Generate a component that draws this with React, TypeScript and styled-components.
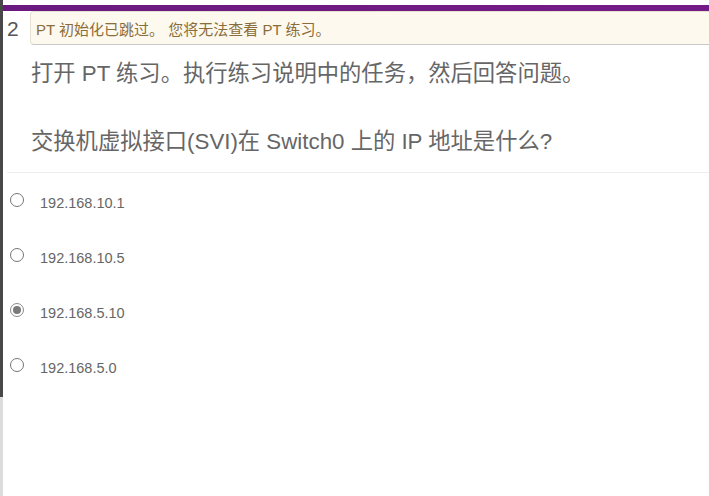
import React from "react";
import styled, { createGlobalStyle } from "styled-components";

const GlobalStyle = createGlobalStyle`
  html, body {
    margin: 0;
    padding: 0;
    background: #fff;
    overflow: hidden;
  }
  body {
    font-family: "Liberation Sans", Arial, "Noto Sans CJK SC", sans-serif;
  }
`;

const Page = styled.div`
  display: flex;
  width: 709px;
  height: 496px;
  overflow: hidden;
`;

const SideRail = styled.div`
  width: 3px;
  display: flex;
  flex-direction: column;
  flex-shrink: 0;
`;

const RailDark = styled.div`
  height: 397px;
  background: #484848;
`;

const RailLight = styled.div`
  flex: 1;
  background: #dcdcdc;
`;

const Main = styled.div`
  flex: 1;
  display: flex;
  flex-direction: column;
  min-width: 0;
`;

const PurpleBar = styled.div`
  margin-top: 5px;
  height: 6px;
  background: linear-gradient(90deg, #6a1a7e 0%, #751b88 100%);
`;

const HeaderRow = styled.div`
  display: flex;
  align-items: center;
  padding-left: 4px;
`;

const QuestionNo = styled.div`
  width: 23px;
  font-size: 21px;
  color: #555;
  line-height: 1;
`;

const Alert = styled.div`
  flex: 1;
  height: 32px;
  margin-right: -6px;
  display: flex;
  align-items: center;
  padding-left: 5px;
  background: #fdf9ee;
  border: 1px solid #e6e0d2;
  border-bottom-color: #c8c8c8;
  border-radius: 4px;
  font-size: 15px;
  color: #8a6d3b;
  white-space: nowrap;
`;

const Question = styled.div`
  padding-left: 28px;
  margin-top: 14px;
`;

const QLine = styled.p<{ $gap?: number }>`
  margin: ${(p) => p.$gap ?? 0}px 0 0;
  font-size: 22.3px;
  line-height: 30px;
  color: #666;
  white-space: nowrap;
`;

const Divider = styled.hr`
  margin: 15px 0 0 4px;
  border: none;
  border-top: 1px solid #eeeeee;
`;

const Options = styled.div`
  display: flex;
  flex-direction: column;
  padding-top: 2px;
`;

const OptionRow = styled.label`
  height: 55px;
  display: flex;
  align-items: center;
  padding-left: 7px;
  gap: 16px;
  font-size: 14.5px;
  color: #666;
`;

const Radio = styled.span<{ $checked?: boolean }>`
  box-sizing: border-box;
  width: 14px;
  height: 14px;
  margin-bottom: 6px;
  border-radius: 50%;
  border: 1px solid ${(p) => (p.$checked ? "#8a8a8a" : "#767676")};
  display: flex;
  align-items: center;
  justify-content: center;
  &::after {
    content: "";
    display: ${(p) => (p.$checked ? "block" : "none")};
    width: 8px;
    height: 8px;
    border-radius: 50%;
    background: #7a7a7a;
  }
`;

const answers = [
  { text: "192.168.10.1", checked: false },
  { text: "192.168.10.5", checked: false },
  { text: "192.168.5.10", checked: true },
  { text: "192.168.5.0", checked: false },
];

export default function App() {
  return (
    <>
      <GlobalStyle />
      <Page>
        <SideRail>
          <RailDark />
          <RailLight />
        </SideRail>
        <Main>
          <PurpleBar />
          <HeaderRow>
            <QuestionNo>2</QuestionNo>
            <Alert>PT 初始化已跳过。 您将无法查看 PT 练习。</Alert>
          </HeaderRow>
          <Question>
            <QLine>打开 PT 练习。执行练习说明中的任务，然后回答问题。</QLine>
            <QLine $gap={38}>交换机虚拟接口(SVI)在 Switch0 上的 IP 地址是什么?</QLine>
          </Question>
          <Divider />
          <Options>
            {answers.map((a) => (
              <OptionRow key={a.text}>
                <Radio $checked={a.checked} />
                {a.text}
              </OptionRow>
            ))}
          </Options>
        </Main>
      </Page>
    </>
  );
}
